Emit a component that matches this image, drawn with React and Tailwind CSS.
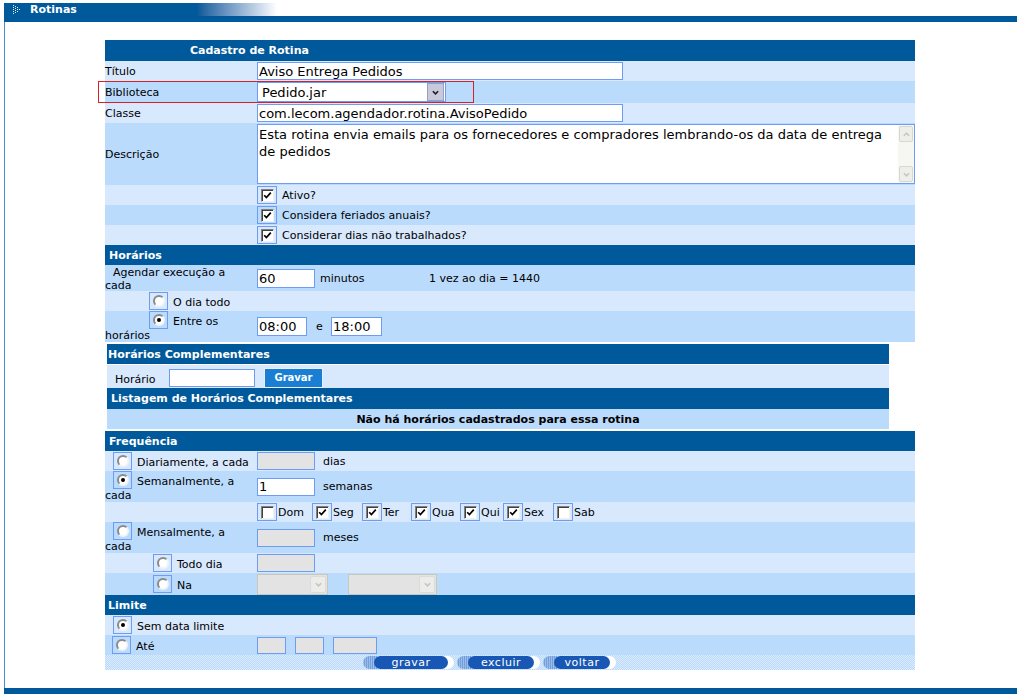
import React from "react";

const Chevron = ({ up = false, color = "#222", size = 7 }) => (
  <svg width={size} height={Math.ceil(size / 2) + 1} viewBox="0 0 8 5" className={up ? "rotate-180" : ""}>
    <path d="M1 1 L4 4 L7 1" stroke={color} strokeWidth="1.8" fill="none" />
  </svg>
);

const Check = ({ checked }) => (
  <span className="flex h-[18px] w-[20px] shrink-0 items-center justify-center border border-[#6e9cf4]">
    <span className="flex h-[13px] w-[13px] items-center justify-center border-t border-l border-r border-b border-t-[#808080] border-l-[#808080] border-r-[#f0f0f0] border-b-[#f0f0f0] bg-white shadow-[inset_1px_1px_0_#404040]">
      {checked && (
        <svg width="9" height="9" viewBox="0 0 9 9">
          <path d="M1.2 4.2 L3.4 6.6 L7.8 1.6" stroke="#000" strokeWidth="1.7" fill="none" />
        </svg>
      )}
    </span>
  </span>
);

const Radio = ({ checked }) => (
  <span className="flex h-[18px] w-[19px] shrink-0 items-center justify-center border border-[#6e9cf4]">
    <span className="flex h-[12px] w-[12px] items-center justify-center rounded-full border-2 border-t-[#8a8a8a] border-l-[#8a8a8a] border-r-[#f4f4f4] border-b-[#f4f4f4] bg-white">
      {checked && <span className="h-[4px] w-[4px] rounded-full bg-black" />}
    </span>
  </span>
);

const Field = ({ className = "", value = "", disabled = false }) => (
  <div
    className={`flex shrink-0 items-center overflow-hidden whitespace-nowrap border border-[#6e9cf4] pl-[1px] text-[13px] leading-none ${
      disabled ? "bg-[#e3e3e3]" : "bg-white"
    } ${className}`}
  >
    {value}
  </div>
);

const GraySelect = ({ className = "" }) => (
  <div className={`flex h-[21px] shrink-0 items-center justify-end border border-[#c8c8c0] bg-[#e3e3e3] p-[1px] ${className}`}>
    <div className="flex h-[17px] w-[16px] items-center justify-center rounded-[2px] border border-[#dcdcd6] bg-[#ececea]">
      <Chevron color="#c4c4c4" />
    </div>
  </div>
);

const Bar = ({ children, className = "" }) => (
  <div className={`flex h-[20px] items-center bg-[#00599a] pt-[2px] text-[11px] font-bold text-white ${className}`}>{children}</div>
);

const Row = ({ dark, h, label, children, className = "" }) => (
  <div className={`flex items-center ${dark ? "bg-[#bbdbfd]" : "bg-[#d8e9fe]"} ${h} ${className}`}>
    <div className="w-[152px] shrink-0 pt-[2px]">{label}</div>
    <div className="flex flex-1 items-center">{children}</div>
  </div>
);

const T = ({ className = "", children }) => <span className={`pt-[2px] ${className}`}>{children}</span>;

const RadioLabel = ({ pad, checked, text, second }) => (
  <div className="-mt-[2px] leading-[13px]">
    <div className={`flex items-center ${pad}`}>
      <Radio checked={checked} />
      <span className="ml-[5px] whitespace-nowrap pt-[2px]">{text}</span>
    </div>
    {second && <div>{second}</div>}
  </div>
);

const Day = ({ label, checked, w }) => (
  <div className={`flex items-center ${w}`}>
    <Check checked={checked} />
    <span className="ml-[1px] pt-[2px]">{label}</span>
  </div>
);

const Pill = ({ label, w }) => (
  <div className="flex h-[13px] items-center">
    <div className="h-[13px] w-[14px] rounded-l-full bg-[repeating-linear-gradient(90deg,#8fb2e3_0_1px,#5b8fd4_1px_2px)] opacity-80" />
    <div className={`relative z-10 -ml-[3px] flex h-[13px] items-center justify-center rounded-full bg-[#1858b4] text-[11px] leading-none tracking-[0.5px] text-white ${w}`}>
      {label}
    </div>
    <div className="-ml-[7px] h-[13px] w-[13px] rounded-r-full bg-white" />
  </div>
);

export default function App() {
  return (
    <div className="h-[694px] w-[1020px] overflow-hidden bg-white font-['DejaVu_Sans',Verdana,sans-serif] text-[11px] text-black">
      <div className="h-[3px]" />
      {/* Title tab */}
      <div className="ml-[4px] w-[1013px]">
        <div className="flex h-[13px]">
          <div className="flex w-[193px] items-center bg-[#00599a] pl-[9px]">
            <svg width="8" height="9" viewBox="0 0 8 9">
              {[
                [0, 0], [0, 2], [0, 4], [0, 6], [0, 8],
                [2, 1], [2, 3], [2, 5], [2, 7],
                [4, 2], [4, 4], [4, 6],
                [6, 4],
              ].map(([x, y], i) => (
                <rect key={i} x={x} y={y} width="1" height="1" fill="#e6eef6" />
              ))}
            </svg>
            <span className="ml-[9px] text-[11px] font-bold leading-none text-white">Rotinas</span>
          </div>
          <div className="w-[80px] bg-gradient-to-r from-[#00599a] to-white" />
        </div>
        <div className="h-[6px] bg-[#00599a]" />
      </div>

      {/* Body */}
      <div className="ml-[4px] h-[666px] w-[1013px] border-l border-[#4b8ccc] pl-[100px] pt-[18px]">
        <div className="w-[810px]">
          <Bar className="h-[21px] pl-[85px]">Cadastro de Rotina</Bar>
          <Row h="h-[20px]" label="Título">
            <Field className="h-[18px] w-[366px]" value="Aviso Entrega Pedidos" />
          </Row>
          <Row dark h="h-[22px]" label="Biblioteca" className="relative">
            <div className="pointer-events-none absolute left-[-7px] top-0 h-[22px] w-[376px] border border-[#d8202a]" />
            <div className="flex h-[20px] w-[189px] items-center border border-[#6e9cf4] bg-white">
              <span className="flex-1 pl-[4px] text-[13px] leading-none">Pedido.jar</span>
              <div className="mr-[1px] flex h-[18px] w-[17px] items-center justify-center border border-[#9c9eb4] bg-[#c8cad9]">
                <Chevron color="#1a1a2e" />
              </div>
            </div>
          </Row>
          <Row h="h-[20px]" label="Classe">
            <Field className="h-[18px] w-[366px]" value="com.lecom.agendador.rotina.AvisoPedido" />
          </Row>
          <Row dark h="h-[62px]" label="Descrição">
            <div className="flex h-[60px] w-[658px] border border-[#6e9cf4] bg-white">
              <div className="flex-1 whitespace-nowrap pl-[1px] pt-[1px] text-[13px] leading-[17px]">
                Esta rotina envia emails para os fornecedores e compradores lembrando-os da data de entrega
                <br />
                de pedidos
              </div>
              <div className="flex w-[16px] flex-col justify-between bg-[#f6f6f2] p-[1px]">
                <div className="flex h-[16px] items-center justify-center rounded-[2px] border border-[#d8d8d0] bg-[#efefea]">
                  <Chevron up color="#c6c6c6" />
                </div>
                <div className="flex h-[16px] items-center justify-center rounded-[2px] border border-[#d8d8d0] bg-[#efefea]">
                  <Chevron color="#c6c6c6" />
                </div>
              </div>
            </div>
          </Row>
          <Row h="h-[20px]" label="">
            <Check checked />
            <T className="ml-[5px]">Ativo?</T>
          </Row>
          <Row dark h="h-[20px]" label="">
            <Check checked />
            <T className="ml-[5px]">Considera feriados anuais?</T>
          </Row>
          <Row h="h-[20px]" label="">
            <Check checked />
            <T className="ml-[5px]">Considerar dias não trabalhados?</T>
          </Row>

          <Bar className="pl-[4px]">Horários</Bar>
          <Row
            dark
            h="h-[26px]"
            label={
              <div className="leading-[13px]">
                <div className="pl-[8px]">Agendar execução a</div>
                <div>cada</div>
              </div>
            }
          >
            <Field className="h-[19px] w-[58px]" value="60" />
            <T className="ml-[5px] w-[109px]">minutos</T>
            <T>1 vez ao dia = 1440</T>
          </Row>
          <Row h="h-[20px]" label={<RadioLabel pad="pl-[44px]" text="O dia todo" />} />
          <Row dark h="h-[31px]" label={<RadioLabel pad="pl-[44px]" checked text="Entre os" second="horários" />}>
            <Field className="h-[19px] w-[50px]" value="08:00" />
            <T className="ml-[9px] w-[15px]">e</T>
            <Field className="h-[19px] w-[51px]" value="18:00" />
          </Row>

          <div className="h-[2px]" />
          {/* Horários complementares */}
          <div className="ml-[2px] w-[782px]">
            <Bar className="pl-[1px]">Horários Complementares</Bar>
            <div className="h-[1px]" />
            <div className="flex h-[23px] items-center bg-[#d8e9fe] pl-[8px] pt-[2px]">
              <span className="w-[54px] pt-[5px]">Horário</span>
              <Field className="h-[18px] w-[86px]" />
              <div className="ml-[9px] flex h-[20px] w-[59px] items-center justify-center border border-[#e6f0fc] bg-[#1a7fd2] text-[10px] font-bold text-white">
                Gravar
              </div>
            </div>
            <Bar className="h-[21px] pl-[4px]">Listagem de Horários Complementares</Bar>
            <div className="flex h-[20px] items-center justify-center bg-[#bbdbfd] pt-[2px] font-bold">
              Não há horários cadastrados para essa rotina
            </div>
          </div>
          <div className="h-[2px]" />

          <Bar className="pl-[4px]">Frequência</Bar>
          <Row h="h-[20px]" label={<RadioLabel pad="pl-[8px]" text="Diariamente, a cada" />}>
            <Field disabled className="h-[18px] w-[58px]" />
            <T className="ml-[8px]">dias</T>
          </Row>
          <Row dark h="h-[31px]" label={<RadioLabel pad="pl-[8px]" checked text="Semanalmente, a" second="cada" />}>
            <Field className="h-[18px] w-[58px]" value="1" />
            <T className="ml-[8px]">semanas</T>
          </Row>
          <Row h="h-[20px]" label="">
            <Day label="Dom" w="w-[55px]" />
            <Day label="Seg" checked w="w-[50px]" />
            <Day label="Ter" checked w="w-[49px]" />
            <Day label="Qua" checked w="w-[49px]" />
            <Day label="Qui" checked w="w-[43px]" />
            <Day label="Sex" checked w="w-[50px]" />
            <Day label="Sab" w="w-[50px]" />
          </Row>
          <Row dark h="h-[31px]" label={<RadioLabel pad="pl-[8px]" text="Mensalmente, a" second="cada" />}>
            <Field disabled className="h-[18px] w-[58px]" />
            <T className="ml-[8px]">meses</T>
          </Row>
          <Row h="h-[20px]" label={<RadioLabel pad="pl-[48px]" text="Todo dia" />}>
            <Field disabled className="h-[18px] w-[58px]" />
          </Row>
          <Row dark h="h-[22px]" label={<RadioLabel pad="pl-[48px]" text="Na" />}>
            <GraySelect className="w-[71px]" />
            <GraySelect className="ml-[20px] w-[89px]" />
          </Row>

          <Bar className="pl-[3px]">Limite</Bar>
          <Row h="h-[20px]" label={<RadioLabel pad="pl-[8px]" checked text="Sem data limite" />} />
          <Row dark h="h-[20px]" label={<RadioLabel pad="pl-[7px]" text="Até" />}>
            <Field disabled className="h-[17px] w-[29px]" />
            <Field disabled className="ml-[9px] h-[17px] w-[29px]" />
            <Field disabled className="ml-[9px] h-[17px] w-[44px]" />
          </Row>
          <div className="flex h-[15px] items-center gap-[3px] bg-[repeating-conic-gradient(#bbdbfd_0_25%,#dbeafc_0_50%)] bg-[length:2px_2px] pl-[258px]">
            <Pill label="gravar" w="w-[74px]" />
            <Pill label="excluir" w="w-[66px]" />
            <Pill label="voltar" w="w-[56px]" />
          </div>
        </div>
      </div>
      <div className="ml-[4px] h-[6px] w-[1013px] bg-[#00599a]" />
    </div>
  );
}
